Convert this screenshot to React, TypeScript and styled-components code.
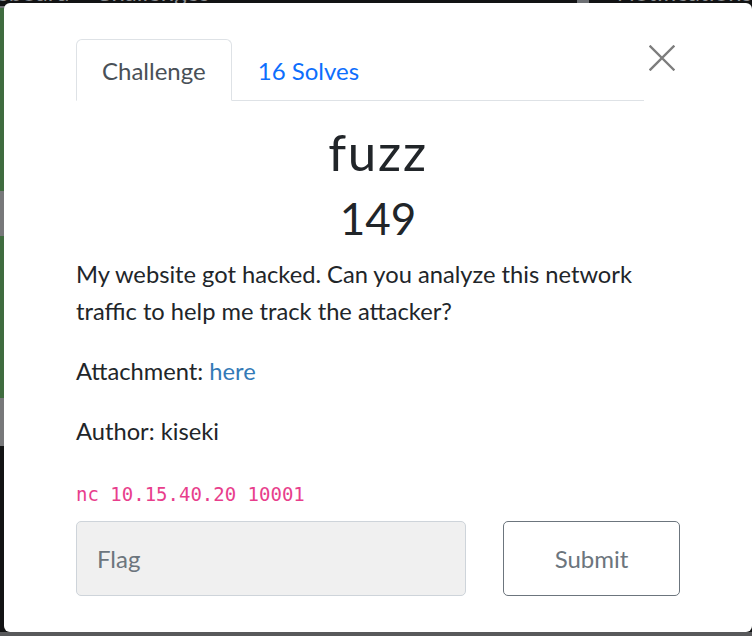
import React from "react";
import styled, { createGlobalStyle } from "styled-components";

const Global = createGlobalStyle`
  html, body { margin: 0; padding: 0; }
  body {
    width: 752px;
    height: 636px;
    overflow: hidden;
    background: #121314;
    font-family: Lato, "Open Sans", "Liberation Sans", sans-serif;
  }
`;

/* ---------- backdrop page (dimmed) ---------- */
const Page = styled.div`
  position: relative;
  width: 752px;
  height: 636px;
  overflow: hidden;
  background: #121314;
  display: flex;
  flex-direction: column;
`;

const NavBar = styled.div`
  height: 28px;
  display: flex;
  align-items: flex-end;
  margin-top: -22px;
  font-size: 24px;
  color: #8b8e92;
  gap: 26px;
`;

const NavText = styled.span<{ $ml?: number }>`
  margin-left: ${(p) => p.$ml ?? 0}px;
  white-space: nowrap;
`;

const NavIcon = styled.span`
  display: inline-block;
  width: 12px;
  height: 22px;
  background: #6d7074;
  margin-left: auto;
  margin-right: -12px;
`;

const SideStrip = styled.div`
  display: flex;
  flex-direction: column;
  width: 6px;
  flex: 1;
`;

const Band = styled.div<{ $h: number; $c: string }>`
  height: ${(p) => p.$h}px;
  background: ${(p) => p.$c};
  flex: none;
`;

const BottomBar = styled.div`
  height: 4px;
  background: #58595b;
`;

/* ---------- modal ---------- */
const Modal = styled.div`
  position: absolute;
  top: 3px;
  left: 4px;
  width: 748px;
  height: 629px;
  box-sizing: border-box;
  background: #fff;
  border-radius: 6px;
  padding: 36px 72px 36px;
  display: flex;
  flex-direction: column;
  color: #212529;
`;

const HeaderRow = styled.div`
  display: flex;
  align-items: flex-start;
`;

const Tabs = styled.div`
  flex: 1;
  display: flex;
  border-bottom: 1px solid #dee2e6;
`;

const Tab = styled.div<{ $active?: boolean }>`
  box-sizing: border-box;
  height: 62px;
  margin-bottom: -1px;
  padding: 0 25px;
  display: flex;
  align-items: center;
  font-size: 24px;
  color: ${(p) => (p.$active ? "#495057" : "#0d6efd")};
  background: ${(p) => (p.$active ? "#fff" : "transparent")};
  border: 1px solid ${(p) => (p.$active ? "#dee2e6" : "transparent")};
  border-bottom-color: ${(p) => (p.$active ? "#fff" : "transparent")};
  border-radius: 6px 6px 0 0;
`;

const Close = styled.button`
  width: 36px;
  height: 36px;
  border: none;
  background: transparent;
  padding: 0 0 0 5px;
  margin-top: 6px;
  display: flex;
  align-items: flex-start;
  justify-content: flex-start;
`;

const Title = styled.h2`
  margin: 20px 0 0;
  text-align: center;
  font-size: 51px;
  font-weight: 400;
  line-height: 1.2;
  letter-spacing: 1.8px;
`;

const Value = styled.h3`
  margin: 10px 0 0;
  text-align: center;
  font-size: 44px;
  font-weight: 400;
  line-height: 1.2;
`;

const Desc = styled.div`
  margin-top: 11px;
  font-size: 23.7px;
  line-height: 37px;
  p {
    margin: 0 0 23px;
  }
`;

const Link = styled.a`
  color: #337ab7;
  text-decoration: none;
`;

const Code = styled.code`
  display: block;
  margin-top: 10px;
  font-family: "DejaVu Sans Mono", "Liberation Mono", monospace;
  font-size: 19px;
  color: #e83e8c;
`;

const FormRow = styled.div`
  margin-top: auto;
  display: grid;
  grid-template-columns: 390px 1fr;
  column-gap: 37px;
`;

const FlagInput = styled.input`
  box-sizing: border-box;
  height: 75px;
  padding: 0 20px;
  font-family: inherit;
  font-size: 24px;
  background: #f0f0f0;
  border: 1px solid #ced4da;
  border-radius: 5px;
  color: #495057;
  outline: none;
  &::placeholder {
    color: #6c757d;
  }
`;

const Submit = styled.button`
  box-sizing: border-box;
  height: 75px;
  font-family: inherit;
  font-size: 24px;
  color: #6c757d;
  background: #fff;
  border: 1px solid #6c757d;
  border-radius: 5px;
`;

export default function App() {
  return (
    <>
      <Global />
      <Page>
        <NavBar>
          <NavText $ml={-50}>Scoreboard</NavText>
          <NavText>Challenges</NavText>
          <NavIcon />
          <NavText $ml={14}>Notifications</NavText>
        </NavBar>
        <SideStrip>
          <Band $h={2} $c="#6f7173" />
          <Band $h={183} $c="#3f6c3f" />
          <Band $h={45} $c="#77787a" />
          <Band $h={162} $c="#3f6c3f" />
          <Band $h={48} $c="#77787a" />
        </SideStrip>
        <BottomBar />
        <Modal>
          <HeaderRow>
            <Tabs>
              <Tab $active>Challenge</Tab>
              <Tab>16 Solves</Tab>
            </Tabs>
            <Close aria-label="Close">
              <svg width="26" height="26" viewBox="0 0 26 26">
                <path d="M1.5 1.5 L24.5 24.5 M24.5 1.5 L1.5 24.5" stroke="#7d7d7d" strokeWidth="2.4" strokeLinecap="square" />
              </svg>
            </Close>
          </HeaderRow>
          <Title>fuzz</Title>
          <Value>149</Value>
          <Desc>
            <p>My website got hacked. Can you analyze this network traffic to help me track the attacker?</p>
            <p>
              Attachment: <Link href="#">here</Link>
            </p>
            <p>Author: kiseki</p>
          </Desc>
          <Code>nc 10.15.40.20 10001</Code>
          <FormRow>
            <FlagInput placeholder="Flag" />
            <Submit>Submit</Submit>
          </FormRow>
        </Modal>
      </Page>
    </>
  );
}
